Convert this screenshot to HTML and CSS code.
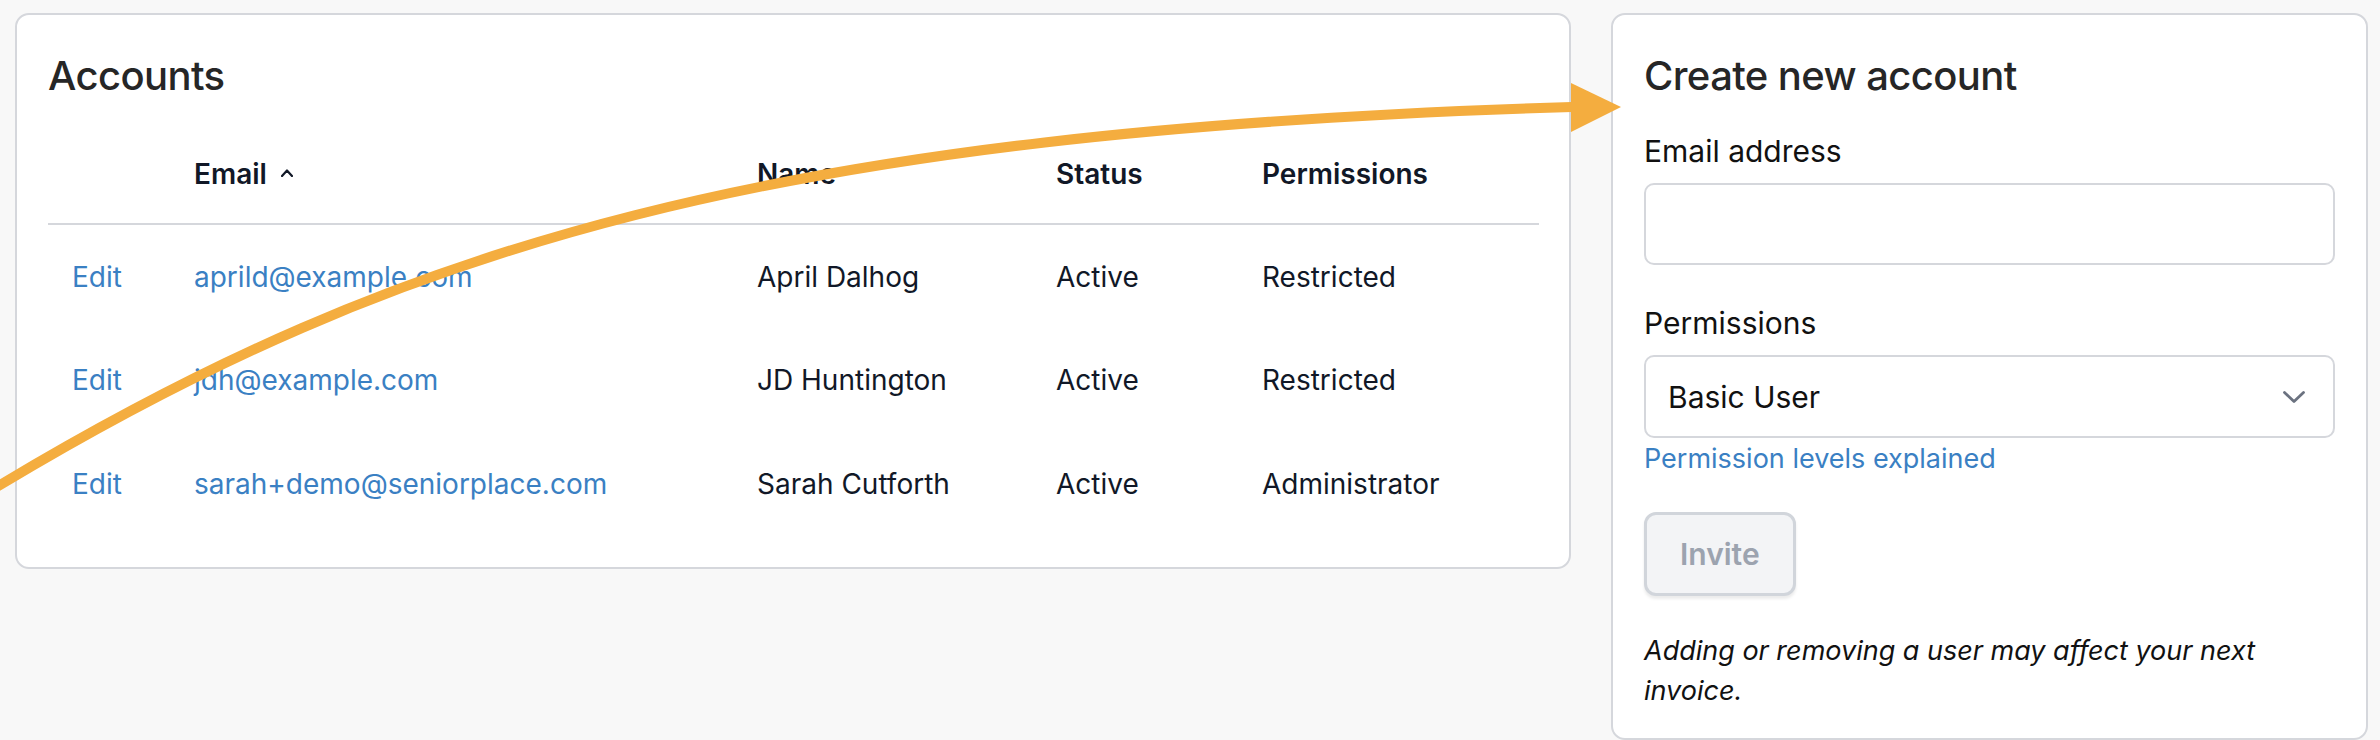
FILE: index.html
```html
<!DOCTYPE html>
<html lang="en">
<head>
<meta charset="utf-8">
<title>Accounts</title>
<link rel="stylesheet" href="styles.css">
</head>
<body>
<div class="page">
  <section class="card accounts">
    <h2 class="card-title">Accounts</h2>
    <div class="table">
      <div class="row head">
        <div class="cell"></div>
        <div class="cell">Email<svg class="sort-caret" width="12" height="8" viewBox="0 0 12 8"><path d="M1 7 L6 1.5 L11 7" fill="none" stroke="#111827" stroke-width="2.2" stroke-linecap="round" stroke-linejoin="round"/></svg></div>
        <div class="cell">Name</div>
        <div class="cell">Status</div>
        <div class="cell">Permissions</div>
      </div>
      <div class="row body-row">
        <div class="cell"><a class="link" href="#">Edit</a></div>
        <div class="cell"><a class="link" href="#">aprild@example.com</a></div>
        <div class="cell">April Dalhog</div>
        <div class="cell">Active</div>
        <div class="cell">Restricted</div>
      </div>
      <div class="row body-row">
        <div class="cell"><a class="link" href="#">Edit</a></div>
        <div class="cell"><a class="link" href="#">jdh@example.com</a></div>
        <div class="cell">JD Huntington</div>
        <div class="cell">Active</div>
        <div class="cell">Restricted</div>
      </div>
      <div class="row body-row">
        <div class="cell"><a class="link" href="#">Edit</a></div>
        <div class="cell"><a class="link" href="#">sarah+demo@seniorplace.com</a></div>
        <div class="cell">Sarah Cutforth</div>
        <div class="cell">Active</div>
        <div class="cell">Administrator</div>
      </div>
    </div>
  </section>

  <section class="card create">
    <h2 class="card-title">Create new account</h2>
    <label class="field-label" for="email">Email address</label>
    <input class="text-input" id="email" type="email">
    <label class="field-label">Permissions</label>
    <div class="select">
      <span>Basic User</span>
      <svg class="select-chevron" width="22" height="12" viewBox="0 0 22 12"><path d="M1.5 1.5 L11 10.5 L20.5 1.5" fill="none" stroke="#6b7280" stroke-width="2.8" stroke-linecap="round" stroke-linejoin="round"/></svg>
    </div>
    <a class="help-link" href="#">Permission levels explained</a>
    <button class="invite" type="button" disabled>Invite</button>
    <p class="note">Adding or removing a user may affect your next invoice.</p>
  </section>
</div>

<svg class="arrow-overlay" width="2380" height="740" viewBox="0 0 2380 740">
  <path d="M-30 503 L0 485 C400 245 771 131 1572 107" fill="none" stroke="#f4ad3f" stroke-width="10"/>
  <polygon points="1571,83 1571,132 1621,107" fill="#f4ad3f"/>
</svg>
</body>
</html>
```

FILE: styles.css
```css
html, body {
  margin: 0;
}

body {
  position: relative;
  width: 2380px;
  height: 740px;
  overflow: hidden;
  background: #f8f8f8;
  font-family: Inter, "Noto Sans", "Liberation Sans", sans-serif;
  color: #111827;
}

.page {
  display: flex;
  align-items: flex-start;
  gap: 40px;
  padding: 13px 12px 0 15px;
}

.card {
  box-sizing: border-box;
  background: #ffffff;
  border: 2px solid #d5d7dc;
  border-radius: 14px;
}

.accounts {
  width: 1556px;
  padding: 37px 30px 31.5px 31px;
}

.create {
  width: 757px;
  padding: 37px 31px 27px 31px;
}

.card-title {
  margin: 0 0 22px;
  font-size: 40px;
  line-height: 48px;
  font-weight: 500;
  letter-spacing: -0.6px;
  color: #262626;
}

.create .card-title {
  margin-bottom: 31px;
}

/* table */
.row {
  display: grid;
  grid-template-columns: 122px 563px 299px 206px 1fr;
}

.cell {
  padding-left: 24px;
  font-size: 28px;
  line-height: 40px;
  white-space: nowrap;
}

.head {
  padding: 32px 0 29px;
  border-bottom: 2px solid #d5d7dc;
  font-weight: 600;
}

.body-row {
  padding: 31.75px 0;
}

.sort-caret {
  margin-left: 14px;
  vertical-align: 7px;
}

.link {
  color: #3a80c3;
  text-decoration: none;
}

/* form */
.field-label {
  display: block;
  margin-bottom: 12px;
  font-size: 30px;
  line-height: 40px;
  color: #111111;
}

.text-input {
  display: block;
  box-sizing: border-box;
  width: 100%;
  height: 82px;
  margin: 0 0 38px;
  border: 2px solid #d5d7dc;
  border-radius: 10px;
  background: #ffffff;
}

.select {
  box-sizing: border-box;
  display: flex;
  align-items: center;
  justify-content: space-between;
  height: 83px;
  padding: 0 28px 0 22px;
  border: 2px solid #d5d7dc;
  border-radius: 10px;
  font-size: 30px;
  line-height: 40px;
  color: #111111;
}

.help-link {
  display: block;
  margin-top: 3px;
  font-size: 27px;
  line-height: 36px;
  color: #3a80c3;
  text-decoration: none;
}

.invite {
  display: block;
  box-sizing: border-box;
  height: 84px;
  margin-top: 35px;
  padding: 0 33px;
  border: 3px solid #d1d5db;
  border-radius: 12px;
  background: #f3f4f6;
  color: #9ca3af;
  font-family: inherit;
  font-size: 30px;
  font-weight: 600;
  box-shadow: 0 3px 3px rgba(0, 0, 0, 0.08);
}

.note {
  margin: 35px 0 0;
  font-size: 27px;
  line-height: 40px;
  font-style: italic;
  color: #111111;
}

/* annotation arrow drawn over the page */
.arrow-overlay {
  position: absolute;
  top: 0;
  left: 0;
  pointer-events: none;
}
```
